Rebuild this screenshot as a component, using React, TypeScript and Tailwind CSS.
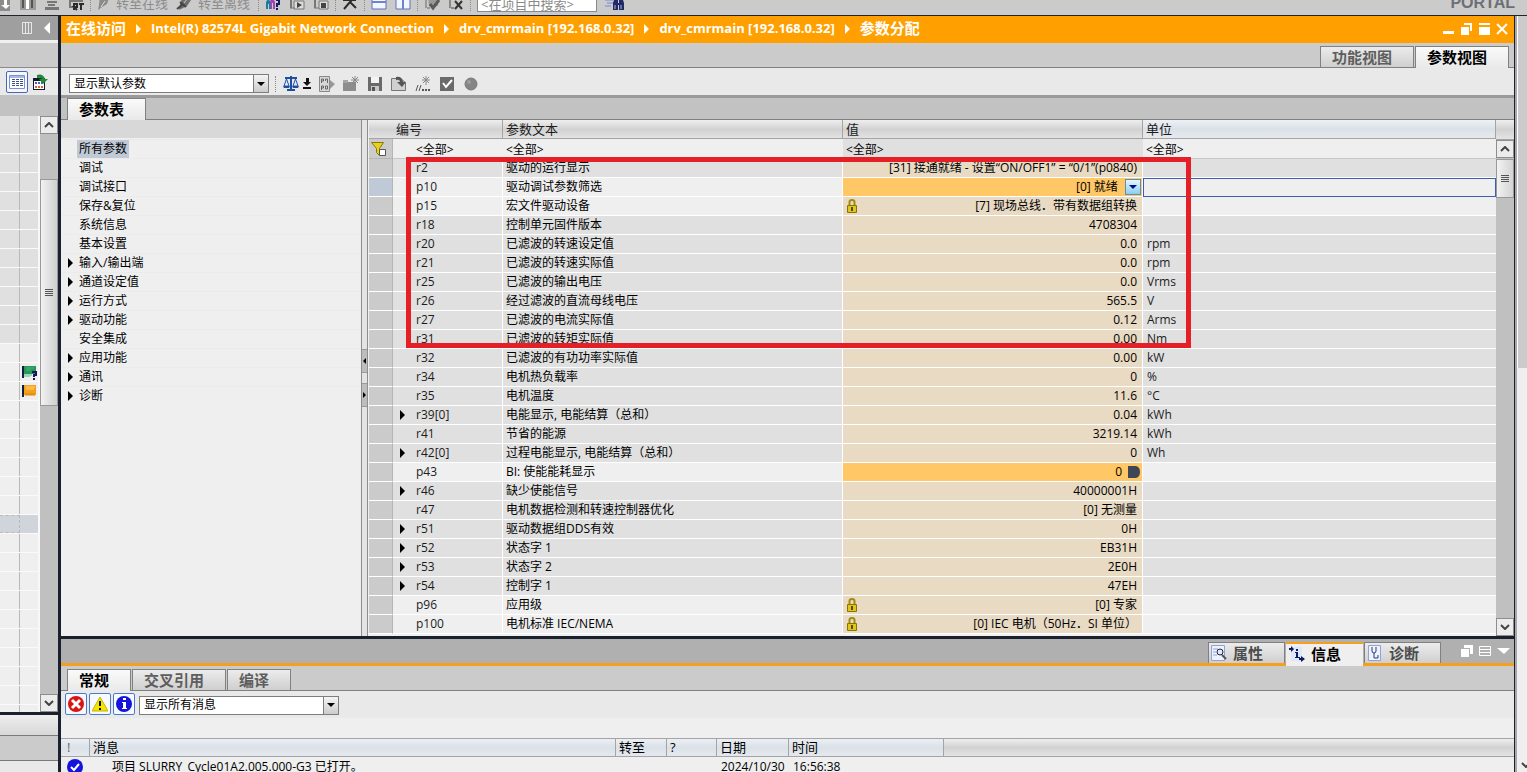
import type { ReactNode } from 'react'
import clsx from 'clsx'

interface Param {
  id: string
  text: string
  value: string
  unit?: string
  expandable?: boolean
  locked?: boolean
  kind?: 'select' | 'bico'
}

interface TreeItem {
  label: string
  expandable?: boolean
  selected?: boolean
}

const PARAMS: Param[] = [
  { id: 'r2', text: '驱动的运行显示', value: '[31] 接通就绪 - 设置“ON/OFF1” = “0/1”(p0840)' },
  { id: 'p10', text: '驱动调试参数筛选', value: '[0] 就绪', kind: 'select' },
  { id: 'p15', text: '宏文件驱动设备', value: '[7] 现场总线．带有数据组转换', locked: true },
  { id: 'r18', text: '控制单元固件版本', value: '4708304' },
  { id: 'r20', text: '已滤波的转速设定值', value: '0.0', unit: 'rpm' },
  { id: 'r21', text: '已滤波的转速实际值', value: '0.0', unit: 'rpm' },
  { id: 'r25', text: '已滤波的输出电压', value: '0.0', unit: 'Vrms' },
  { id: 'r26', text: '经过滤波的直流母线电压', value: '565.5', unit: 'V' },
  { id: 'r27', text: '已滤波的电流实际值', value: '0.12', unit: 'Arms' },
  { id: 'r31', text: '已滤波的转矩实际值', value: '0.00', unit: 'Nm' },
  { id: 'r32', text: '已滤波的有功功率实际值', value: '0.00', unit: 'kW' },
  { id: 'r34', text: '电机热负载率', value: '0', unit: '%' },
  { id: 'r35', text: '电机温度', value: '11.6', unit: '°C' },
  { id: 'r39[0]', text: '电能显示, 电能结算（总和）', value: '0.04', unit: 'kWh', expandable: true },
  { id: 'r41', text: '节省的能源', value: '3219.14', unit: 'kWh' },
  { id: 'r42[0]', text: '过程电能显示, 电能结算（总和）', value: '0', unit: 'Wh', expandable: true },
  { id: 'p43', text: 'BI: 使能能耗显示', value: '0', kind: 'bico' },
  { id: 'r46', text: '缺少使能信号', value: '40000001H', expandable: true },
  { id: 'r47', text: '电机数据检测和转速控制器优化', value: '[0] 无测量' },
  { id: 'r51', text: '驱动数据组DDS有效', value: '0H', expandable: true },
  { id: 'r52', text: '状态字 1', value: 'EB31H', expandable: true },
  { id: 'r53', text: '状态字 2', value: '2E0H', expandable: true },
  { id: 'r54', text: '控制字 1', value: '47EH', expandable: true },
  { id: 'p96', text: '应用级', value: '[0] 专家', locked: true },
  { id: 'p100', text: '电机标准 IEC/NEMA', value: '[0] IEC 电机（50Hz．SI 单位）', locked: true },
]

const TREE: TreeItem[] = [
  { label: '所有参数', selected: true },
  { label: '调试' },
  { label: '调试接口' },
  { label: '保存&复位' },
  { label: '系统信息' },
  { label: '基本设置' },
  { label: '输入/输出端', expandable: true },
  { label: '通道设定值', expandable: true },
  { label: '运行方式', expandable: true },
  { label: '驱动功能', expandable: true },
  { label: '安全集成' },
  { label: '应用功能', expandable: true },
  { label: '通讯', expandable: true },
  { label: '诊断', expandable: true },
]

const CRUMBS = [
  'Intel(R) 82574L Gigabit Network Connection',
  'drv_cmrmain [192.168.0.32]',
  'drv_cmrmain [192.168.0.32]',
]

const HEAD = 'bg-gradient-to-b from-[#eeeeee] via-[#d2d2d2] to-[#e4e4e4]'
const HEAD_BLUE = 'bg-gradient-to-b from-[#eef1f6] via-[#dbe1e8] to-[#e6eaef]'

function Icon({ children, className }: { children: ReactNode; className?: string }) {
  return (
    <svg width="16" height="16" viewBox="0 0 16 16" className={clsx('shrink-0', className)} aria-hidden="true">
      {children}
    </svg>
  )
}

function Caret({ className = 'fill-black' }: { className?: string }) {
  return (
    <svg width="5" height="10" viewBox="0 0 5 10" className={clsx('shrink-0', className)} aria-hidden="true">
      <path d="M0 0l5 5-5 5z" />
    </svg>
  )
}

function Sep() {
  return <span className="mx-[6px] h-4 border-l border-dotted border-[#8a8a8a]" />
}

function IconButton({ label, children }: { label: string; children: ReactNode }) {
  return (
    <button type="button" aria-label={label} className="flex shrink-0">
      {children}
    </button>
  )
}

function TopToolbar() {
  return (
    <div className="h-4 shrink-0 overflow-hidden border-b border-[#20242c] bg-[#cbcbcb]">
      <div className="-ml-1 -mt-[6px] flex h-[18px] items-center">
        <div className="flex gap-2">
          <IconButton label="下载">
            <Icon><path d="M2 2h12v14H2z" fill="#8b8b8b" /><path d="M8 5h3v5h3l-4 4-5-4h3z" fill="#fff" /></Icon>
          </IconButton>
          <IconButton label="上传">
            <Icon><path d="M0 1h16v14H0z" fill="#9b9b9b" /><path d="M2 2h2v11H2zM11 2h2v11h-2z" fill="#555" /><path d="M6 2h3v12H6z" fill="#fff" /></Icon>
          </IconButton>
          <IconButton label="编译">
            <Icon><path d="M3 2h9v2H3zM3 6h10v2H3zM4 9h7v2H4zM1 12h14v3H1z" fill="#777" /></Icon>
          </IconButton>
          <IconButton label="启动运行系统">
            <Icon>
              <path d="M1 1h2v12H1zM1 11h4v2H1zM3 3h12v4H3z" fill="#777" />
              <path d="M6 15V9h3v3H6l3 3M11 9h5M13 9v6" stroke="#2c2c2c" strokeWidth="2" fill="none" />
            </Icon>
          </IconButton>
        </div>
        <Sep />
        <div className="flex items-center pr-[2px] text-[13px] text-[#8c8c8c]">
          <Icon><path d="M3 0l9 3-2 6-5 3-4 3 1-5z" fill="#8a8a8a" /><path d="M4 12l4-6" stroke="#ddd" /></Icon>
          <button type="button" className="ml-[3px] whitespace-nowrap leading-[18px]">转至在线</button>
          <Icon className="ml-2"><path d="M7 1l6-1 2 5-4 6-8 4 1-6z" fill="#6e6e6e" /><path d="M4 7l6 5M1 14l5-4" stroke="#444" strokeWidth="2" /><path d="M8 8l4-5" stroke="#ccc" /></Icon>
          <button type="button" className="ml-[6px] whitespace-nowrap leading-[18px]">转至离线</button>
        </div>
        <Sep />
        <div className="flex gap-2">
          <IconButton label="可访问的设备">
            <Icon>
              <path d="M1 14V7l2-3 3 3v7H4V9H3v5z" fill="#1d7c9c" /><path d="M5 3h3l2 4v7H8V8H7v6H6z" fill="#a83fb8" />
              <path d="M11 5h3v4h-2v3M12 13v2" stroke="#151a60" strokeWidth="2" fill="none" />
            </Icon>
          </IconButton>
          <IconButton label="启动 CPU">
            <Icon><path d="M1 1h2v12H1zM4 3h10v2H4z" fill="#777" /><path d="M1 13h5M5 6h10v8H5z" stroke="#777" fill="#ddd" /><path d="M8 7l5 3-5 3z" fill="#444" /></Icon>
          </IconButton>
          <IconButton label="停止 CPU">
            <Icon><path d="M1 1h2v12H1zM4 3h10v2H4z" fill="#777" /><path d="M1 13h5M6 6h9v8H6z" stroke="#777" fill="#ddd" /><path d="M8 8h5v5H8z" fill="#444" /></Icon>
          </IconButton>
        </div>
        <Sep />
        <IconButton label="关闭">
          <Icon><path d="M2 14l6-7 6 6M8 7l5-5M1 5h13" stroke="#2c2c2c" strokeWidth="2" fill="none" /></Icon>
        </IconButton>
        <Sep />
        <div className="flex gap-2">
          <IconButton label="水平拆分">
            <Icon><path d="M1 1h14v13H1z" fill="#f4f6ff" stroke="#5b6fc0" /><path d="M1 6h14v2H1z" fill="#6d83d0" /></Icon>
          </IconButton>
          <IconButton label="垂直拆分">
            <Icon><path d="M1 1h14v13H1z" fill="#f4f6ff" stroke="#5b6fc0" /><path d="M7 1h2v13H7z" fill="#6d83d0" /></Icon>
          </IconButton>
        </div>
        <Sep />
        <div className="flex gap-2">
          <IconButton label="接受">
            <Icon><path d="M1 1h2v12H1zM3 12h3v2H3zM4 2h10v9H5z" fill="#999" /><path d="M6 9l3 4 6-8" stroke="#5a5a5a" strokeWidth="3" fill="none" /></Icon>
          </IconButton>
          <IconButton label="拒绝">
            <Icon><path d="M1 1h2v12H1zM3 12h3v2H3zM4 3h10v2H4z" fill="#888" /><path d="M7 6l7 8M14 6l-7 8" stroke="#333" strokeWidth="2" /></Icon>
          </IconButton>
        </div>
        <Sep />
        <input
          aria-label="在项目中搜索"
          defaultValue="<在项目中搜索>"
          className="h-[18px] w-[120px] border border-[#8a8a8a] bg-white px-[3px] text-[13px] leading-4 text-[#8a8a8a] outline-none"
        />
        <button type="button" aria-label="搜索" className="ml-2">
          <svg width="20" height="16" viewBox="0 0 20 16">
            <path d="M0 5h8M2 8h6M0 11h6" stroke="#7088d8" />
            <path d="M8 8l2-6h3v6h1V2h3l2 6v7h-5v-5h-1v5H8z" fill="#1f2a66" /><path d="M10 10v4M16 10v4" stroke="#aab8ee" />
          </svg>
        </button>
        <span className="ml-auto mr-3 font-['Liberation_Sans'] text-[16px] font-bold leading-[18px] text-[#6c6f74]">PORTAL</span>
      </div>
    </div>
  )
}

function ScrollButton({ up }: { up?: boolean }) {
  return (
    <button
      type="button"
      aria-label={up ? '向上滚动' : '向下滚动'}
      className="flex h-[18px] w-full shrink-0 items-center justify-center border border-[#8e8e8e] bg-[#ececec]"
    >
      <svg width="10" height="6" viewBox="0 0 10 6" fill="none" stroke="#444" strokeWidth="2">
        <path d={up ? 'M1 5l4-4 4 4' : 'M1 1l4 4 4-4'} />
      </svg>
    </button>
  )
}

function Grip() {
  return (
    <span className="flex flex-col gap-px">
      <span className="h-px w-2 bg-[#555]" />
      <span className="h-px w-2 bg-[#555]" />
      <span className="h-px w-2 bg-[#555]" />
      <span className="h-px w-2 bg-[#555]" />
    </span>
  )
}

function ProjectPane() {
  return (
    <aside className="flex w-[58px] shrink-0 flex-col bg-[#cbcbcb]">
      <div className="flex h-6 shrink-0 items-center justify-end gap-3 bg-[#9f9f9f] pr-2">
        <svg width="10" height="12" viewBox="0 0 10 12" stroke="#e8e8e8" fill="none">
          <path d="M.5 .5h9v11h-9zM3.500 0v12M6.500 0v12" />
        </svg>
        <svg width="6" height="12" viewBox="0 0 6 12" fill="#fff"><path d="M6 0v12L0 6z" /></svg>
      </div>
      <div className="h-[3px] shrink-0 bg-[#f0f0f0]" />
      <div className="h-[25px] shrink-0 border-b border-[#8a8a8a]" />
      <div className="flex h-[27px] shrink-0 items-center gap-1 bg-[#e9e9e9] pl-[6px]">
        <button type="button" aria-label="列表" className="flex size-[22px] items-center justify-center rounded-[2px] border border-[#4a66b8] bg-[#f4f7ff]">
          <Icon>
            <path d="M.5 1.500h15v13H.5z" fill="#fff" stroke="#7d93c8" />
            <path d="M1 2h14v2H1z" fill="#a9b9e4" />
            <path d="M3 5h3v1H3zM7 5h3v1H7zM11 5h3v1h-3zM3 7h3v1H3zM7 7h3v1H7zM11 7h3v1h-3zM3 9h3v1H3zM7 9h3v1H7zM11 9h3v1h-3zM3 11h3v1H3zM7 11h3v1H7zM11 11h3v1h-3z" fill="#3b4f8c" />
          </Icon>
        </button>
        <IconButton label="导出">
          <Icon>
            <path d="M1 4h12v12H1z" fill="#151a30" /><path d="M2 7h10v8H2z" fill="#fff" />
            <path d="M3 8h2v2H3zM6 8h2v2H6zM9 8h2v2H9z" fill="#4a5fb0" /><path d="M3 12h2v2H3zM6 12h2v2H6zM9 12h2v2H9z" fill="#c63" />
            <path d="M5 1q6-2 8 4h3l-5 5-4-5h3Q9 3 5 4z" fill="#1d8a3a" />
          </Icon>
        </IconButton>
      </div>
      <div className="h-[21px] shrink-0 bg-[#c2c2c2]" />
      <div className="flex min-h-0 flex-1">
        <div className="min-h-0 flex-1 overflow-hidden border-r-2 border-[#f8f8f8] bg-[#efefef]">
          {Array.from({ length: 32 }, (_, i) => (
            <div
              key={i}
              className={clsx(
                'flex h-[19px] border-b border-[#fafafa]',
                i < 12 && 'bg-[#e0e0e0]',
                i === 21 && 'bg-[#cfd5da]',
              )}
            >
              <div className={clsx('w-5 border-r border-[#b8b8b8]', i === 21 && 'border border-l-0 border-dashed border-[#777]')} />
              <div className="flex items-center pl-[2px]">
                {i === 13 && (
                  <Icon>
                    <path d="M1 2v12" stroke="#102040" strokeWidth="2" /><path d="M2 2h12v8H2z" fill="#28965a" />
                    <path d="M4 4h8M4 6h5M3 10v3M5 10v3M7 10v3M9 10v2" stroke="#4ab878" />
                    <path d="M10 8h4v3h-2v2M12 14v2" stroke="#151a60" strokeWidth="2" fill="none" />
                  </Icon>
                )}
                {i === 14 && (
                  <Icon>
                    <path d="M1 2v12" stroke="#102040" strokeWidth="2" /><path d="M2 2h12v10H2z" fill="#f5a01c" />
                    <path d="M4 4h9M4 6h8" stroke="#ffd27a" /><path d="M4 10v3M6 10v3M8 10v3M10 10v3M12 10v3" stroke="#d88400" />
                  </Icon>
                )}
              </div>
            </div>
          ))}
        </div>
        <div className="flex w-[18px] flex-col bg-[#c0c0c0]">
          <ScrollButton up />
          <div className="mt-[45px] flex h-[227px] items-center justify-center border border-[#999] bg-gradient-to-r from-[#f2f2f2] to-[#cfcfcf]">
            <Grip />
          </div>
          <div className="mt-auto flex"><ScrollButton /></div>
        </div>
      </div>
      <div className="h-[3px] shrink-0 bg-[#1a212c]" />
      <div className="h-5 shrink-0 bg-gradient-to-b from-[#eee] to-[#d8d8d8]" />
      <div className="h-[26px] shrink-0 border-y border-[#7a7a7a] bg-[#cbcbcb]" />
      <div className="h-[11px] shrink-0 bg-[#e9e9e9]" />
    </aside>
  )
}

function TitleBar() {
  return (
    <header className="flex h-[27px] shrink-0 items-center bg-[#ff9f00] pb-[2px] pl-[5px] pr-[6px] text-white">
      <nav aria-label="路径" className="flex items-center whitespace-nowrap text-[13px] font-bold">
        <a href="#online" className="text-[15px]">在线访问</a>
        {CRUMBS.map((c, i) => (
          <span key={i} className="flex items-center">
            <Caret className="mx-[10px] fill-white" />
            <a href="#crumb">{c}</a>
          </span>
        ))}
        <Caret className="mx-[10px] fill-white" />
        <a href="#params" className="text-[15px]">参数分配</a>
      </nav>
      <div className="ml-auto flex gap-[6px]">
        <button type="button" aria-label="最小化">
          <svg width="12" height="12" viewBox="0 0 12 12" fill="#fff"><path d="M1 8h11v3H1z" /></svg>
        </button>
        <button type="button" aria-label="浮动">
          <svg width="12" height="12" viewBox="0 0 12 12" fill="#fff"><path d="M1 4h8v8H1zM4 0h8v8h-2V2H4z" /></svg>
        </button>
        <button type="button" aria-label="最大化">
          <svg width="12" height="12" viewBox="0 0 12 12" fill="#fff"><path d="M1 0h11v2H1zM1 4h11v8H1z" /></svg>
        </button>
        <button type="button" aria-label="关闭编辑器">
          <svg width="12" height="12" viewBox="0 0 12 12" stroke="#fff" strokeWidth="2"><path d="M1 1l10 10M11 1L1 11" /></svg>
        </button>
      </div>
    </header>
  )
}

function Tab({ label, active, className }: { label: string; active?: boolean; className?: string }) {
  return (
    <button
      type="button"
      className={clsx(
        'border border-[#808080] pl-[11px] text-left text-[15px] font-bold leading-[18px]',
        active
          ? '-mb-px h-[22px] border-b-0 bg-gradient-to-b from-[#fafafa] to-[#e9e9e9] pb-[2px] text-black'
          : 'h-[21px] border-b-0 bg-gradient-to-b from-[#ececec] to-[#cfcfcf] text-[#5e5e5e]',
        className,
      )}
    >
      {label}
    </button>
  )
}

function Combo({ label, value }: { label: string; value: string }) {
  return (
    <span className="relative flex h-[19px] w-[200px]">
      <select aria-label={label} className="w-full appearance-none border border-[#7d7d7d] bg-white pl-1 text-[12px] leading-4 outline-none">
        <option>{value}</option>
      </select>
      <span className="pointer-events-none absolute inset-y-px right-px flex w-[15px] items-center justify-center border-l border-[#7d7d7d] bg-gradient-to-b from-[#f4f4f4] to-[#cccccc]">
        <svg width="8" height="4" viewBox="0 0 8 4"><path d="M0 0h8L4 4z" /></svg>
      </span>
    </span>
  )
}

function ParamToolbar() {
  return (
    <div className="flex h-[27px] shrink-0 items-center bg-[#e9e9e9] pl-2 pt-1">
      <Combo label="参数显示" value="显示默认参数" />
      <Sep />
      <div className="flex items-center gap-2 pl-px">
        <button type="button" aria-label="比较" className="flex items-center gap-1">
          <Icon>
            <path d="M8 0v14M2 2h12M4 14h8" stroke="#1f4fa0" strokeWidth="2" fill="none" />
            <path d="M3.500 3L1 10h5zM12.500 3L10 10h5z" fill="#e4eeff" stroke="#1f4fa0" /><path d="M0 10h7l-1 2H1zM9 10h7l-1 2h-5z" fill="#1f4fa0" />
          </Icon>
          <svg width="8" height="12" viewBox="0 0 8 12"><path d="M3 0h3v4h2L4 8 0 4h3zM0 9h8v2H0z" fill="#111" /></svg>
        </button>
        <IconButton label="参数号">
          <Icon>
            <path d="M.5 .5h10v15H.5z" fill="#d8d8d8" stroke="#888" /><path d="M11 4l5 4-5 5z" fill="#999" />
            <path d="M2.500 7V3h2v2h-2M6.500 5V3h2v4M2.500 14v-4h2v2h-2M6.500 10h2v3h-2z" stroke="#666" fill="none" />
          </Icon>
        </IconButton>
        <IconButton label="新建">
          <Icon><path d="M0 6h13v9H0z" fill="#8d8d8d" /><path d="M0 4h5v3H0z" fill="#a5a5a5" /><path d="M12 0v9M8 4h8M9 1l6 6M15 1L9 7" stroke="#888" /></Icon>
        </IconButton>
        <IconButton label="保存">
          <Icon><path d="M1 1h14v14H1z" fill="#6a6a6a" /><path d="M4 1h8v6H4z" fill="#f4f4f4" /><path d="M4 10h8v5H4z" fill="#c9c9c9" /><path d="M5 11h3v4H5z" fill="#555" /></Icon>
        </IconButton>
        <IconButton label="导入">
          <Icon><path d="M.5 2.500h9l5 4v8H.5z" fill="#d0d0d0" stroke="#777" /><path d="M5 1q6-1 7 5h3l-4 5-5-5h3Q9 3 5 4z" fill="#555" /></Icon>
        </IconButton>
        <IconButton label="注释">
          <Icon><path d="M1 15l2-6M4 15l2-6" stroke="#555" /><path d="M7 14h2M10 14h2M13 14h2" stroke="#555" strokeWidth="2" /><path d="M11 0v9M7 4h8M8 1l6 6M14 1L8 7" stroke="#888" /></Icon>
        </IconButton>
        <IconButton label="应用">
          <Icon><path d="M1 1h14v14H1z" fill="#6a6a6a" /><path d="M4 7l3 4 6-7" stroke="#fff" strokeWidth="2" fill="none" /></Icon>
        </IconButton>
        <IconButton label="状态">
          <Icon><circle cx="8" cy="8" r="6" fill="#858585" stroke="#7a7a7a" /><circle cx="6" cy="6" r="2" fill="#9c9c9c" /></Icon>
        </IconButton>
      </div>
    </div>
  )
}

function ParamTree() {
  return (
    <div className="w-[300px] shrink-0 bg-[#efefef] text-[12px]">
      <div className="h-[18px] bg-[#d8d8d8]" />
      <ul className="pt-px">
        {TREE.map((item) => (
          <li key={item.label} className="flex h-[19px] items-center border-t border-[#ebebeb] pl-[7px]">
            <span className="w-[9px]">{item.expandable && <Caret />}</span>
            <button type="button" className={clsx('whitespace-nowrap px-[2px] leading-[18px]', item.selected && 'bg-[#c0cad6]')}>
              {item.label}
            </button>
          </li>
        ))}
      </ul>
    </div>
  )
}

function Splitter() {
  return (
    <div className="flex w-[7px] shrink-0 flex-col border-x border-[#8d8d8d] bg-[#e4e4e4] pt-[229px]">
      <button type="button" aria-label="折叠" className="flex h-6 items-center justify-center border-y border-[#999] bg-[#bdbdbd]">
        <svg width="3" height="6" viewBox="0 0 3 6"><path d="M3 0v6L0 3z" /></svg>
      </button>
      <button type="button" aria-label="展开" className="mt-[10px] flex h-6 items-center justify-center border-y border-[#999] bg-[#bdbdbd]">
        <svg width="3" height="6" viewBox="0 0 3 6"><path d="M0 0v6l3-3z" /></svg>
      </button>
    </div>
  )
}

function Lock() {
  return (
    <svg width="10" height="14" viewBox="0 0 10 14" className="mr-auto shrink-0" aria-label="已锁定">
      <path d="M2.500 6V3q0-2 2.500-2t2.500 2v3" stroke="#a08a10" strokeWidth="2" fill="none" />
      <path d="M.5 6.500h9v7h-9z" fill="#e0c420" stroke="#8a7400" /><path d="M4 8h2v4H4z" fill="#5a4c00" />
    </svg>
  )
}

function ValueCell({ param }: { param: Param }) {
  if (param.kind === 'select') {
    return (
      <div className="relative flex h-[18px] justify-end">
        <select aria-label={param.text} className="appearance-none bg-transparent pr-6 leading-[18px] outline-none">
          <option>{param.value}</option>
        </select>
        <span className="pointer-events-none absolute right-px top-px flex h-4 w-4 items-center justify-center border border-[#5b8fb8] bg-gradient-to-b from-[#e4f6ff] to-[#8ccdf2]">
          <svg width="8" height="4" viewBox="0 0 8 4" fill="#001080"><path d="M0 0h8L4 4z" /></svg>
        </span>
      </div>
    )
  }
  return (
    <div className="flex h-[18px] items-center justify-end pl-1 pr-[5px] leading-[18px]">
      {param.locked && <Lock />}
      {param.value}
      {param.kind === 'bico' && (
        <svg width="12" height="12" viewBox="0 0 12 12" className="-mr-[3px] ml-[6px]">
          <path d="M0 0h8q4 1 4 6t-4 6H0z" fill="#3c4656" />
        </svg>
      )}
    </div>
  )
}

function ParamTable() {
  const th = 'h-[19px] border-b border-r border-[#a4a4a4] p-0 pl-[3px] text-left text-[13px] font-normal leading-[18px]'
  const filter = 'h-[20px] border-b border-[#c6c6c6] p-0 pl-[3px]'
  const input = 'block h-[19px] w-full bg-transparent pt-px text-[12px] outline-none'
  return (
    <div className="relative flex min-w-0 flex-1 overflow-hidden bg-[#efefef] pl-px">
      <div className="min-w-0 flex-1 overflow-hidden">
        <table className="w-full table-fixed border-separate border-spacing-0 text-[12px] leading-[18px] text-[#1c1c1c]">
          <colgroup>
            <col className="w-6" />
            <col className="w-[110px]" />
            <col className="w-[340px]" />
            <col className="w-[300px]" />
            <col />
          </colgroup>
          <thead>
            <tr className={HEAD}>
              <th className={clsx(th, 'border-r-0')} />
              <th className={th}>编号</th>
              <th className={th}>参数文本</th>
              <th className={th}>值</th>
              <th className={clsx(th, HEAD_BLUE)}>单位</th>
            </tr>
            <tr className="text-black">
              <th className="border-b border-r border-[#b5b5b5] bg-[#cbcbcb] p-0">
                <button type="button" aria-label="筛选" className="flex pl-[2px]">
                  <Icon>
                    <path d="M.5 1.500h12l-4 6v7l-3-3v-4z" fill="#e8d020" stroke="#8a7800" />
                    <path d="M8.500 8.500h6v6h-6z" fill="#fff" stroke="#555" />
                  </Icon>
                </button>
              </th>
              <td className={clsx(filter, 'pl-[23px]')}><input aria-label="筛选编号" defaultValue="<全部>" className={input} /></td>
              <td className={filter}><input aria-label="筛选参数文本" defaultValue="<全部>" className={input} /></td>
              <td className={clsx(filter, 'bg-[#e0e0e0]')}><input aria-label="筛选值" defaultValue="<全部>" className={input} /></td>
              <td className={filter}><input aria-label="筛选单位" defaultValue="<全部>" className={input} /></td>
            </tr>
          </thead>
          <tbody>
            {PARAMS.map((p) => {
              const active = p.kind === 'select'
              const cell = 'h-[19px] border-b border-white p-0 whitespace-nowrap overflow-hidden'
              return (
                <tr key={p.id} className={p.id.startsWith('r') ? 'bg-[#e0e0e0]' : 'bg-[#efefef]'}>
                  <td className={clsx(cell, 'border-r border-r-[#b5b5b5]', active ? 'bg-[#c0cad6]' : 'bg-[#cbcbcb]')} />
                  <td className={clsx(cell, 'border-r')}>
                    <div className="flex items-center pl-[7px]">
                      <span className="w-4">{p.expandable && <Caret />}</span>
                      {p.id}
                    </div>
                  </td>
                  <td className={clsx(cell, 'border-r pl-[3px] text-black')}>{p.text}</td>
                  <td className={clsx(cell, 'border-r text-black', p.kind ? 'bg-[#ffc766]' : 'bg-[#e8dac3]')}>
                    <ValueCell param={p} />
                  </td>
                  <td className={clsx(cell, 'pl-1', active && 'outline outline-[#3a5fb0] -outline-offset-1')}>{p.unit}</td>
                </tr>
              )
            })}
          </tbody>
        </table>
      </div>
      <div className="flex w-[18px] shrink-0 flex-col bg-[#c0c0c0]">
        <div className={clsx('h-5 shrink-0 border-b border-[#a4a4a4]', HEAD)} />
        <ScrollButton up />
        <div className="mt-px flex h-[39px] items-center justify-center border border-[#999] bg-gradient-to-r from-[#f2f2f2] to-[#d4d4d4]">
          <Grip />
        </div>
        <div className="mt-auto flex"><ScrollButton /></div>
      </div>
      {/* highlight frame around r2 .. r31 */}
      <div className="pointer-events-none absolute left-[38px] top-[37px] h-[191px] w-[785px] border-[5px] border-[#e61e25]" />
    </div>
  )
}

function InspectorTab({ label, active, icon }: { label: string; active?: boolean; icon: ReactNode }) {
  return (
    <button
      type="button"
      className={clsx(
        'flex w-[77px] items-center gap-[6px] text-[15px] font-bold',
        active
          ? '-mb-[3px] h-6 border-t-2 border-[#f5a01c] bg-[#efefef] pb-[3px] pl-[3px] text-black'
          : 'h-[21px] border border-b-0 border-[#808080] bg-gradient-to-b from-[#ececec] to-[#cfcfcf] pl-[2px] text-[#4c4c4c]',
      )}
    >
      {icon}
      <span className="leading-[18px]">{label}</span>
    </button>
  )
}

function MessageTable() {
  const th = 'h-[19px] border-y border-r border-[#a4a4a4] p-0 pl-[3px] text-left text-[13px] font-normal leading-[17px]'
  return (
    <table className="w-full table-fixed border-separate border-spacing-0 text-[12px]">
      <colgroup>
        <col className="w-[29px]" />
        <col className="w-[526px]" />
        <col className="w-[51px]" />
        <col className="w-[50px]" />
        <col className="w-[72px]" />
        <col className="w-[155px]" />
        <col />
      </colgroup>
      <thead>
        <tr className={HEAD_BLUE}>
          <th className={clsx(th, 'pl-[6px] text-[#666]')}>!</th>
          <th className={th}>消息</th>
          <th className={th}>转至</th>
          <th className={th}>?</th>
          <th className={th}>日期</th>
          <th className={th}>时间</th>
          <th className={clsx(th, 'border-r-0', HEAD)} />
        </tr>
      </thead>
      <tbody className="leading-5">
        <tr>
          <td className="p-0 pl-[6px]">
            <Icon><circle cx="8" cy="8" r="8" fill="#1414dc" /><path d="M4 8l3 3 5-6" stroke="#fff" strokeWidth="2" fill="none" /></Icon>
          </td>
          <td className="p-0 pl-[22px]">项目 SLURRY_Cycle01A2.005.000-G3 已打开。</td>
          <td />
          <td />
          <td className="whitespace-nowrap p-0 pl-1">2024/10/30</td>
          <td className="p-0 pl-1">16:56:38</td>
          <td />
        </tr>
      </tbody>
    </table>
  )
}

function Inspector() {
  const toggle = 'flex size-[22px] items-center justify-center rounded-[2px] border border-[#4a7ac8] bg-[#f6f9ff]'
  return (
    <section className="h-[136px] shrink-0 overflow-hidden border-t-[3px] border-[#1a212c] bg-[#efefef]">
      <div className="flex h-[27px] items-end justify-end gap-px border-b-[3px] border-[#f5a01c] bg-[#b0b0b0] pr-1">
        <InspectorTab
          label="属性"
          icon={<Icon><path d="M.5 .5h13v15H.5z" fill="#eef2ff" stroke="#8fa3d8" /><path d="M2 4h5M2 7h3M2 10h4" stroke="#8fa3d8" /><circle cx="9" cy="7" r="3" fill="#dfe8f8" stroke="#223" /><path d="M11 10l4 4" stroke="#555" strokeWidth="2" /></Icon>}
        />
        <InspectorTab
          active
          label="信息"
          icon={
            <Icon>
              <path d="M2 1h11v14H2z" fill="#dfe6fa" />
              <path d="M0 2h2V0l3 3-3 3V4H0zM7 3h2v2H7zM6 6h3v5h2v1H6v-1h1V7H6zM11 12h1v-2l4 3-4 3v-2h-2v-2z" fill="#0a1a60" />
            </Icon>
          }
        />
        <InspectorTab
          label="诊断"
          icon={<Icon><path d="M1.500 .5h12v15h-12z" fill="#eef2ff" stroke="#8fa3d8" /><path d="M5 2v4q0 2 2 2t2-2V2M7 8v5h4v-3" stroke="#2a3c6a" fill="none" /></Icon>}
        />
        <div className="ml-[19px] flex items-center gap-[6px] self-center text-white">
          <button type="button" aria-label="浮动窗口">
            <svg width="12" height="12" viewBox="0 0 12 12" fill="#fff"><path d="M0 4h8v8H0zM3 0h9v9H9V3H3z" /></svg>
          </button>
          <button type="button" aria-label="列表视图">
            <svg width="12" height="12" viewBox="0 0 12 12" stroke="#fff" fill="none"><path d="M.5 1.500h11v9H.5zM0 4.500h12M0 7.500h12" /></svg>
          </button>
          <button type="button" aria-label="折叠窗口">
            <svg width="13" height="12" viewBox="0 0 13 12" fill="#fff"><path d="M0 3h13l-6 6z" /></svg>
          </button>
        </div>
      </div>
      <div className="flex h-[25px] items-end gap-px border-b border-[#808080] bg-[#cbcbcb] pl-[6px]">
        <Tab label="常规" active className="w-16" />
        <Tab label="交叉引用" className="w-[94px]" />
        <Tab label="编译" className="w-16 border-r" />
      </div>
      <div className="flex h-[27px] items-center gap-[2px] bg-[#e9e9e9] pb-[2px] pl-1">
        <button type="button" aria-label="错误" className={toggle}>
          <Icon><circle cx="8" cy="8" r="8" fill="#d81414" /><path d="M4 4l8 8M12 4l-8 8" stroke="#fff" strokeWidth="3" /></Icon>
        </button>
        <button type="button" aria-label="警告" className={toggle}>
          <Icon><path d="M8 1l8 14H0z" fill="#f5e400" stroke="#c8b400" /><path d="M7 5h2v5H7zM7 12h2v2H7z" fill="#111" /></Icon>
        </button>
        <button type="button" aria-label="信息消息" className={toggle}>
          <Icon><circle cx="8" cy="8" r="8" fill="#1414dc" /><path d="M7 2h3v2H7zM6 6h4v6h1v1H6v-1h1V7H6z" fill="#fff" /></Icon>
        </button>
        <span className="ml-[2px] mt-[3px]"><Combo label="消息筛选" value="显示所有消息" /></span>
      </div>
      <div className="h-5" />
      <MessageTable />
    </section>
  )
}

export default function App() {
  return (
    <div className="flex h-screen flex-col overflow-hidden bg-[#cbcbcb] font-['Open_Sans','Noto_Sans_CJK_SC',sans-serif] text-black">
      <TopToolbar />
      <div className="flex min-h-0 flex-1">
        <ProjectPane />
        <main className="flex min-w-0 flex-1 flex-col border-l-[3px] border-r border-[#1a212c]">
          <TitleBar />
          <div className="flex h-[25px] shrink-0 items-end justify-end gap-px border-b border-[#808080] bg-[#cbcbcb] pr-[5px]">
            <Tab label="功能视图" className="w-[94px]" />
            <Tab label="参数视图" active className="w-[94px]" />
          </div>
          <ParamToolbar />
          <div className="flex h-[25px] shrink-0 items-end border-b border-t-[3px] border-b-[#808080] border-t-[#9a9a9a] bg-[#c2c2c2] pl-[6px]">
            <Tab label="参数表" active className="w-[79px]" />
          </div>
          <div className="flex min-h-0 flex-1">
            <ParamTree />
            <Splitter />
            <ParamTable />
          </div>
          <Inspector />
        </main>
        <div className="flex w-3 shrink-0 flex-col border-l-2 border-[#a8a8a8] bg-[#efefef]">
          <div className="h-[352px] border-l border-white bg-[#cbcbcb]" />
          <div className="mt-auto overflow-hidden pb-1 pl-1">
            <svg width="10" height="6" viewBox="0 0 10 6" fill="none" stroke="#444" strokeWidth="2"><path d="M1 1l4 4 4-4" /></svg>
          </div>
        </div>
      </div>
    </div>
  )
}
